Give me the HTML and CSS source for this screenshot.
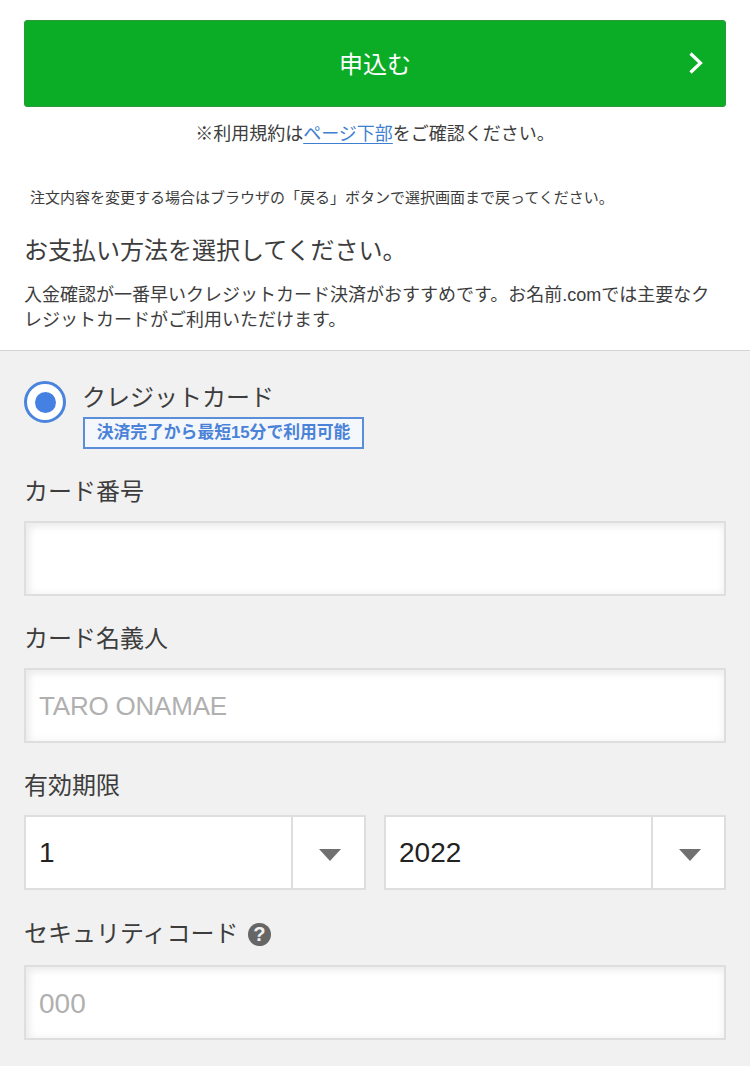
FILE: index.html
```html
<!DOCTYPE html>
<html lang="ja">
<head>
<meta charset="utf-8">
<title>お支払い方法</title>
<link rel="stylesheet" href="styles.css">
</head>
<body>
<section class="top">
  <button class="submit" type="button"><span>申込む</span>
    <svg class="chev" width="16" height="24" viewBox="0 0 16 24"><path d="M2.5 2.5 L12.5 12 L2.5 21.5" fill="none" stroke="#fff" stroke-width="3.2"/></svg>
  </button>
  <p class="terms">※利用規約は<a href="#">ページ下部</a>をご確認ください。</p>
  <p class="note">注文内容を変更する場合はブラウザの「戻る」ボタンで選択画面まで戻ってください。</p>
  <h2 class="title">お支払い方法を選択してください。</h2>
  <p class="lead">入金確認が一番早いクレジットカード決済がおすすめです。お名前.comでは主要なクレジットカードがご利用いただけます。</p>
</section>
<section class="pay">
  <div class="method">
    <span class="radio"><span class="dot"></span></span>
    <div class="method-text">
      <div class="method-name">クレジットカード</div>
      <div class="badge">決済完了から最短15分で利用可能</div>
    </div>
  </div>
  <div class="label">カード番号</div>
  <div class="input"></div>
  <div class="label">カード名義人</div>
  <div class="input"><span class="ph">TARO ONAMAE</span></div>
  <div class="label">有効期限</div>
  <div class="selects">
    <div class="select"><span class="val">1</span><span class="arrow"><i class="tri"></i></span></div>
    <div class="select"><span class="val">2022</span><span class="arrow"><i class="tri"></i></span></div>
  </div>
  <div class="label security">セキュリティコード<svg class="help" width="23" height="23" viewBox="0 0 24 24"><circle cx="12" cy="12" r="12" fill="#666"/><text x="12" y="19" text-anchor="middle" class="q">?</text></svg></div>
  <div class="input code"><span class="ph num">000</span></div>
</section>
</body>
</html>
```
FILE: styles.css
```css
* { box-sizing: border-box; }
html, body { margin: 0; padding: 0; }
body {
  width: 750px;
  height: 1066px;
  overflow: hidden;
  background: #fff;
  color: #3d3d3d;
  font-family: "Liberation Sans", "Noto Sans CJK JP", sans-serif;
}
.top { padding: 20px 24px 0; height: 351px; border-bottom: 1px solid #d4d4d4; }
.submit {
  position: relative;
  display: flex;
  align-items: center;
  justify-content: center;
  width: 702px;
  height: 87px;
  padding: 0 0 2px;
  background: #0bac26;
  border: 1px solid #2b9a3c;
  border-radius: 3px;
  color: #fff;
  font: inherit;
  font-size: 24px;
}
.chev { position: absolute; right: 21px; top: 30px; }
.terms { margin: 15px 0 0; text-align: center; font-size: 18px; line-height: 24px; }
.terms a { color: #3f7fd0; text-decoration: underline; text-underline-offset: 3px; }
.note { margin: 41px 0 0 6px; font-size: 15px; line-height: 22px; white-space: nowrap; }
.title { margin: 25px 0 0; font-size: 24px; line-height: 34px; font-weight: 400; }
.lead { margin: 15px 0 0; font-size: 18px; line-height: 25px; }
.pay { background: #f1f1f1; height: 715px; padding: 30px 24px 0; }
.method { display: flex; align-items: flex-start; gap: 17px; }
.radio {
  display: flex;
  align-items: center;
  justify-content: center;
  width: 42px;
  height: 42px;
  border: 3px solid #4a84dc;
  border-radius: 50%;
  background: #fff;
}
.dot { width: 21px; height: 21px; border-radius: 50%; background: #4481e2; }
.method-text { display: flex; flex-direction: column; align-items: flex-start; }
.method-name { margin-left: -1px; font-size: 24px; line-height: 33px; }
.badge {
  margin-top: 3px;
  height: 32px;
  width: 281px;
  border: 2px solid #5a8ed8;
  background: #f4f7fc;
  color: #4a82d8;
  font-size: 16.8px;
  font-weight: 700;
  line-height: 28px;
  text-align: center;
  white-space: nowrap;
}
.label { display: flex; align-items: center; margin-top: 26px; font-size: 24px; line-height: 34px; height: 34px; }
.label.security { margin-top: 27px; }
.input {
  display: flex;
  align-items: center;
  height: 75px;
  margin-top: 12px;
  padding: 2px 0 0 13px;
  background: #fff;
  border: 2px solid #dedede;
  box-shadow: inset 0 0 8px #efefef, inset 6px 6px 8px -4px #e6e6e6;
}
.input.code { margin-top: 14px; }
.ph { color: #b0b0b0; font-size: 26px; letter-spacing: -0.2px; }
.ph.num { font-size: 28px; letter-spacing: 0; }
.selects { display: flex; gap: 18px; margin-top: 12px; }
.select {
  display: flex;
  flex: 1;
  height: 75px;
  background: #fff;
  border: 2px solid #dedede;
}
.val { flex: 1; padding-left: 13px; font-size: 28px; line-height: 71px; color: #222; }
.arrow {
  display: flex;
  align-items: center;
  justify-content: center;
  width: 73px;
  padding: 4px 0 0 2px;
  border-left: 2px solid #dedede;
}
.tri {
  width: 0;
  height: 0;
  border-left: 11px solid transparent;
  border-right: 11px solid transparent;
  border-top: 12px solid #707070;
}
.help { margin-left: 9px; }
.q { fill: #f1f1f1; font-size: 21px; font-weight: 700; font-family: "Liberation Sans", sans-serif; }
```
